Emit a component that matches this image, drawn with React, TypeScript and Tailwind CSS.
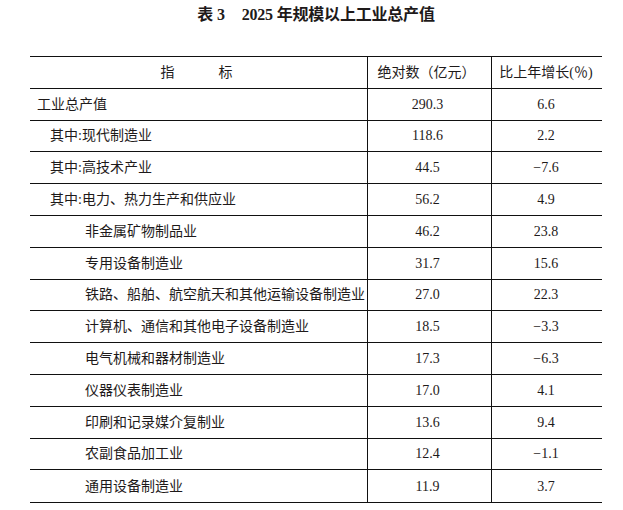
const rows: { name: string; level: 0 | 1 | 2; value: string; growth: string }[] = [
  { name: '工业总产值', level: 0, value: '290.3', growth: '6.6' },
  { name: '其中:现代制造业', level: 1, value: '118.6', growth: '2.2' },
  { name: '其中:高技术产业', level: 1, value: '44.5', growth: '−7.6' },
  { name: '其中:电力、热力生产和供应业', level: 1, value: '56.2', growth: '4.9' },
  { name: '非金属矿物制品业', level: 2, value: '46.2', growth: '23.8' },
  { name: '专用设备制造业', level: 2, value: '31.7', growth: '15.6' },
  { name: '铁路、船舶、航空航天和其他运输设备制造业', level: 2, value: '27.0', growth: '22.3' },
  { name: '计算机、通信和其他电子设备制造业', level: 2, value: '18.5', growth: '−3.3' },
  { name: '电气机械和器材制造业', level: 2, value: '17.3', growth: '−6.3' },
  { name: '仪器仪表制造业', level: 2, value: '17.0', growth: '4.1' },
  { name: '印刷和记录媒介复制业', level: 2, value: '13.6', growth: '9.4' },
  { name: '农副食品加工业', level: 2, value: '12.4', growth: '−1.1' },
  { name: '通用设备制造业', level: 2, value: '11.9', growth: '3.7' },
]

const indent = { 0: 'pl-[7px]', 1: 'pl-[20px]', 2: 'pl-[55px]' }

export default function App() {
  return (
    <div
      className="w-[623px] h-[510px] bg-white text-[#1e1a1a] overflow-hidden"
      style={{ fontFamily: '"Liberation Serif", "Noto Sans CJK SC", serif' }}
    >
      <div className="ml-[30px] w-[572px]">
        <h1 className="pt-[5px] h-[56px] flex justify-center items-start text-[16px] font-bold leading-[20px] tracking-[-0.2px]">
          <span>表 3</span>
          <span className="ml-[17px]">2025 年规模以上工业总产值</span>
        </h1>

        <div className="border-t-[1.5px] border-b-[1.5px] border-[#111] text-[14px]">
          <div className="grid grid-cols-[337px_124px_111px] h-[31.8px] border-b border-[#111]">
            <div className="flex items-center justify-center gap-[44px] pr-[4px]">
              <span>指</span>
              <span>标</span>
            </div>
            <div className="flex items-center justify-center border-l border-[#111] pr-[6px]">绝对数（亿元）</div>
            <div className="flex items-center justify-center border-l border-[#111] pr-[2px]">比上年增长(％)</div>
          </div>
          {rows.map((r, i) => (
            <div
              key={r.name}
              className={`grid grid-cols-[337px_124px_111px] h-[31.8px] ${i < rows.length - 1 ? 'border-b border-[#111]' : ''}`}
            >
              <div className={`flex items-center whitespace-nowrap ${indent[r.level]}`}>{r.name}</div>
              <div className="flex items-center justify-center border-l border-[#111] pr-[4px]">{r.value}</div>
              <div className="flex items-center justify-center border-l border-[#111] pr-[2px]">{r.growth}</div>
            </div>
          ))}
        </div>
      </div>
    </div>
  )
}
